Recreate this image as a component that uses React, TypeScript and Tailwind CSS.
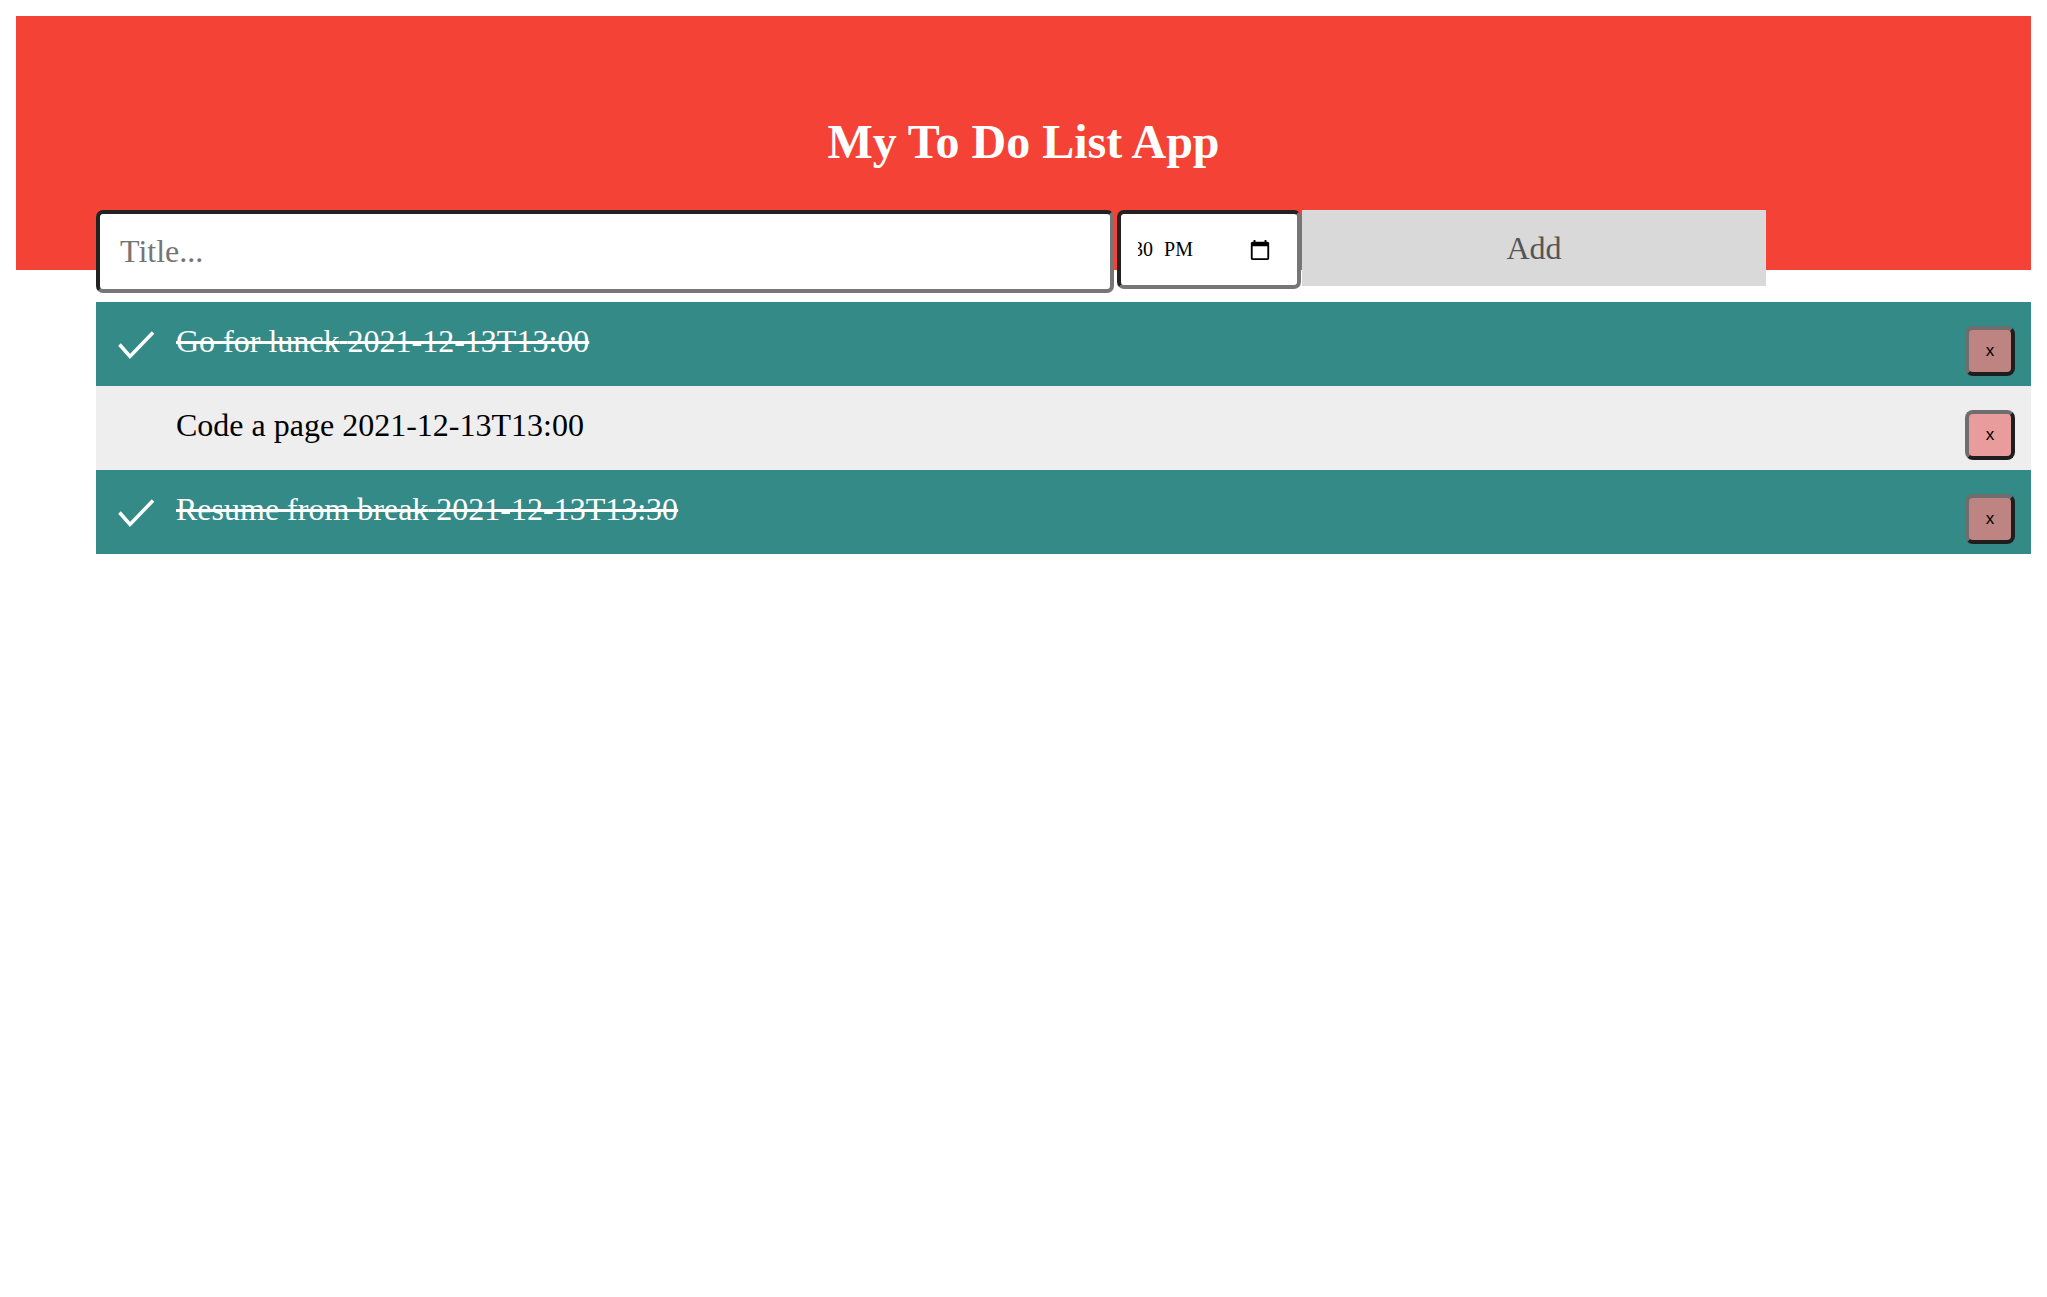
import React from 'react';

type Todo = { title: string; time: string; done: boolean };

const todos: Todo[] = [
  { title: 'Go for lunck', time: '2021-12-13T13:00', done: true },
  { title: 'Code a page', time: '2021-12-13T13:00', done: false },
  { title: 'Resume from break', time: '2021-12-13T13:30', done: true },
];

const CalendarIcon = () => (
  <svg width="22" height="22" viewBox="0 0 24 24" fill="#000">
    <path d="M20 3h-1V1h-2v2H7V1H5v2H4c-1.1 0-2 .9-2 2v16c0 1.1.9 2 2 2h16c1.1 0 2-.9 2-2V5c0-1.1-.9-2-2-2zm0 18H4V8h16v13z" />
  </svg>
);

const TodoRow = ({ todo }: { todo: Todo }) => {
  return (
    <li
      className={
        todo.done
          ? 'flex h-[84px] items-start bg-[#348a87] text-white'
          : 'flex h-[84px] items-start bg-[#eeeeee] text-black'
      }
    >
      <div className="h-[84px] w-[80px] shrink-0">
        {todo.done && (
          <svg width="80" height="84" viewBox="0 0 80 84">
            <polyline
              points="23.5,42.5 34,54.5 57,30.5"
              fill="none"
              stroke="#fff"
              strokeWidth="3.5"
            />
          </svg>
        )}
      </div>
      <span
        className={
          todo.done
            ? 'pt-[21px] text-[32px] leading-[37px] line-through'
            : 'pt-[21px] text-[32px] leading-[37px]'
        }
      >
        {todo.title} {todo.time}
      </span>
      <button
        className={
          todo.done
            ? 'ml-auto mr-4 mt-[24px] flex h-[50px] w-[50px] items-center justify-center rounded-[8px] border-[4px] border-t-[#6e6e6e] border-l-[#6e6e6e] border-r-[#1e1e1e] border-b-[#1e1e1e] bg-[#bd8482] font-["Liberation_Sans",sans-serif] text-[17px] text-black'
            : 'ml-auto mr-4 mt-[24px] flex h-[50px] w-[50px] items-center justify-center rounded-[8px] border-[4px] border-t-[#6e6e6e] border-l-[#6e6e6e] border-r-[#1e1e1e] border-b-[#1e1e1e] bg-[#e99c9c] font-["Liberation_Sans",sans-serif] text-[17px] text-black'
        }
      >
        x
      </button>
    </li>
  );
};

const App = () => {
  return (
    <div className="min-h-screen bg-white p-4 font-['Liberation_Serif',serif]">
      <header className="h-[254px] bg-[#f44336] pt-[98px]">
        <h1 className="text-center text-[48px] font-bold leading-[55px] text-white">
          My To Do List App
        </h1>
      </header>

      <div className="-mt-[60px] ml-20 flex items-start">
        <input
          type="text"
          placeholder="Title..."
          className="h-[83px] w-[1018px] rounded-[7px] border-[4px] border-t-[#222] border-l-[#222] border-r-[#767676] border-b-[#767676] bg-white pl-[20px] text-[32px] text-black outline-none placeholder:text-[#757575]"
        />
        <div className="ml-[3px] flex h-[79px] w-[184px] items-center rounded-[7px] border-[4px] border-t-[#222] border-l-[#222] border-r-[#767676] border-b-[#767676] bg-white">
          <div className="ml-[17px] flex w-[55px] justify-end overflow-hidden whitespace-nowrap text-[20px] leading-[23px] text-black">
            <span>12/13/2021, 01:30</span>
            <span className="ml-[11px]">PM</span>
          </div>
          <div className="ml-auto mr-[26px] flex">
            <CalendarIcon />
          </div>
        </div>
        <button className="ml-px h-[76px] w-[464px] bg-[#d9d9d9] text-[32px] leading-[37px] text-[#555]">
          Add
        </button>
      </div>

      <ul className="ml-20 mt-[9px]">
        {todos.map((todo, i) => (
          <TodoRow key={i} todo={todo} />
        ))}
      </ul>
    </div>
  );
};

export default App;
